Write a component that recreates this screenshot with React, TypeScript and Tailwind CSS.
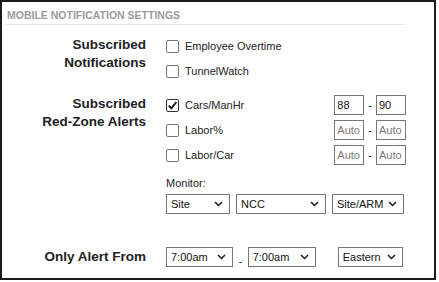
import React from "react";

type Row = { label: string; checked?: boolean; min?: string; max?: string };

const notifications: Row[] = [{ label: "Employee Overtime" }, { label: "TunnelWatch" }];

const redZone: Row[] = [
  { label: "Cars/ManHr", checked: true, min: "88", max: "90" },
  { label: "Labor%" },
  { label: "Labor/Car" },
];

function Chevron() {
  return (
    <svg width="9" height="6" viewBox="0 0 9 6" fill="none" aria-hidden>
      <path d="M1 1l3.5 3.5L8 1" stroke="#1a1a1a" strokeWidth="1.5" />
    </svg>
  );
}

function Check({ checked }: { checked?: boolean }) {
  return (
    <span
      className={`flex-none w-[13px] h-[13px] rounded-[2px] border bg-white flex items-center justify-center ${
        checked ? "border-[#333333]" : "border-[#767676]"
      }`}
    >
      {checked && (
        <svg width="11" height="11" viewBox="0 0 11 11" fill="none" aria-hidden>
          <path d="M1.8 5.6l2.6 2.8L9.4 2" stroke="#111111" strokeWidth="1.9" />
        </svg>
      )}
    </span>
  );
}

function Select({ value, w }: { value: string; w: string }) {
  return (
    <div
      className={`${w} h-[20px] flex items-center justify-between border border-[#767676] bg-white pl-[4px] pr-[6px] text-[11px] text-[#111111]`}
    >
      <span>{value}</span>
      <Chevron />
    </div>
  );
}

function Box({ value }: { value?: string }) {
  return (
    <input
      readOnly
      defaultValue={value}
      placeholder="Auto"
      className="w-[30px] h-[20px] border border-[#767676] px-[2px] text-[11px] text-[#111111] placeholder:text-[#7a7a7a] outline-none bg-white"
    />
  );
}

export default function App() {
  return (
    <div className="w-[439px] h-[282px] bg-white font-['Liberation_Sans',Arial,sans-serif] text-[#222222]">
      <div className="w-[436px] h-[280px] border-2 border-[#1c1c1c]">
        <div className="ml-[3px] mt-[7px] w-[400px] pl-[2px] pb-[2px] border-b border-[#e6e6e6] text-[10.5px] leading-[13px] font-bold text-[#9b9b9b]">
          MOBILE NOTIFICATION SETTINGS
        </div>

        {/* subscribed notifications */}
        <div className="flex mt-[11px]">
          <div className="w-[144px] text-right text-[13.5px] leading-[18px] font-bold">
            Subscribed
            <br />
            Notifications
          </div>
          <div className="ml-[20px] w-[240px] flex flex-col gap-[5px]">
            {notifications.map((n) => (
              <div key={n.label} className="h-[20px] flex items-center">
                <Check checked={n.checked} />
                <span className="ml-[6px] text-[11px]">{n.label}</span>
              </div>
            ))}
          </div>
        </div>

        {/* red-zone alerts */}
        <div className="flex mt-[14px]">
          <div className="w-[144px] text-right text-[13.5px] leading-[18px] font-bold">
            Subscribed
            <br />
            Red-Zone Alerts
          </div>
          <div className="ml-[20px] w-[240px] flex flex-col">
            <div className="flex flex-col gap-[5px]">
              {redZone.map((r) => (
                <div key={r.label} className="h-[20px] flex items-center justify-between">
                  <div className="flex items-center">
                    <Check checked={r.checked} />
                    <span className="ml-[6px] text-[11px]">{r.label}</span>
                  </div>
                  <div className="flex items-center gap-[4px] text-[11px]">
                    <Box value={r.min} />
                    <span>-</span>
                    <Box value={r.max} />
                  </div>
                </div>
              ))}
            </div>
            <div className="mt-[12px] text-[11px] leading-[13px]">Monitor:</div>
            <div className="mt-[4px] flex gap-[6px]">
              <Select value="Site" w="w-[64px]" />
              <Select value="NCC" w="w-[90px]" />
              <Select value="Site/ARM" w="w-[72px]" />
            </div>
          </div>
        </div>

        {/* alert window */}
        <div className="flex items-center mt-[33px]">
          <div className="w-[144px] text-right text-[13.5px] leading-[18px] font-bold">Only Alert From</div>
          <div className="ml-[20px] flex items-center">
            <Select value="7:00am" w="w-[67px]" />
            <span className="self-end mx-[5.5px] text-[11px] leading-[11px]">-</span>
            <Select value="7:00am" w="w-[68px]" />
            <div className="ml-[22px]">
              <Select value="Eastern" w="w-[65px]" />
            </div>
          </div>
        </div>
      </div>
    </div>
  );
}
